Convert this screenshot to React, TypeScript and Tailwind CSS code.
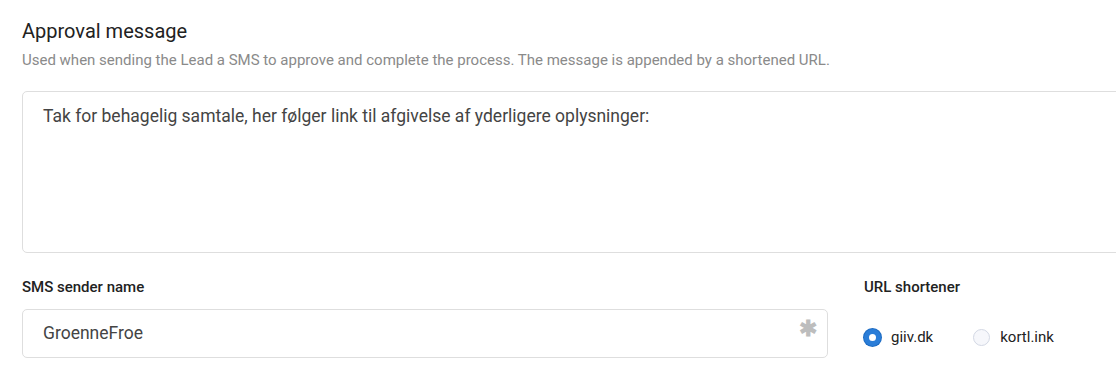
import React, { useState } from 'react';

const FONT = { fontFamily: 'Roboto, "Liberation Sans", sans-serif' };

const Radio: React.FC<{ checked: boolean; label: string; onClick: () => void }> = ({ checked, label, onClick }) => (
  <label className="flex items-center gap-[10px] cursor-pointer" onClick={onClick}>
    <span
      className={
        checked
          ? 'w-[17px] h-[17px] rounded-full border-[5px] border-[#2a7dd8] bg-white shadow-[0_0_0_1px_#1d6bc2]'
          : 'w-[17px] h-[17px] rounded-full border border-[#d3d8e4] bg-[#f6f7fb]'
      }
    />
    <span className="text-[15px] text-[#222]">{label}</span>
  </label>
);

export default function App() {
  const [shortener, setShortener] = useState('giiv.dk');

  return (
    <div className="w-[1116px] h-[378px] overflow-hidden bg-white" style={FONT}>
      <div className="w-[1130px] pl-[22px] pt-[19px]">
        <h2 className="text-[20px] leading-[24px] text-[#222]">Approval message</h2>
        <p className="mt-[8px] text-[15px] leading-[18px] text-[#8a8a8a]">
          Used when sending the Lead a SMS to approve and complete the process. The message is appended by a shortened URL.
        </p>

        <div className="mt-[22px] h-[162px] border border-[#dedede] rounded-[5px] px-[20px] pt-[13px] text-[17.5px] leading-[22px] text-[#444]">
          Tak for behagelig samtale, her følger link til afgivelse af yderligere oplysninger:
        </div>

        <div className="flex mt-[25px]">
          <div className="w-[806px]">
            <div className="text-[15px] leading-[18px] font-medium text-[#222]">SMS sender name</div>
            <div className="mt-[13px] h-[49px] border border-[#dedede] rounded-[5px] flex items-center justify-between pl-[20px] pr-[10px]">
              <span className="text-[17.5px] text-[#444]">GroenneFroe</span>
              <span className="text-[22px] leading-none text-[#bdbdbd] font-bold self-start mt-[8px]">✱</span>
            </div>
          </div>
          <div className="ml-[36px]">
            <div className="text-[15px] leading-[18px] font-medium text-[#222]">URL shortener</div>
            <div className="flex items-center gap-[40px] mt-[30px]">
              <Radio checked={shortener === 'giiv.dk'} label="giiv.dk" onClick={() => setShortener('giiv.dk')} />
              <Radio checked={shortener === 'kortl.ink'} label="kortl.ink" onClick={() => setShortener('kortl.ink')} />
            </div>
          </div>
        </div>
      </div>
    </div>
  );
}
